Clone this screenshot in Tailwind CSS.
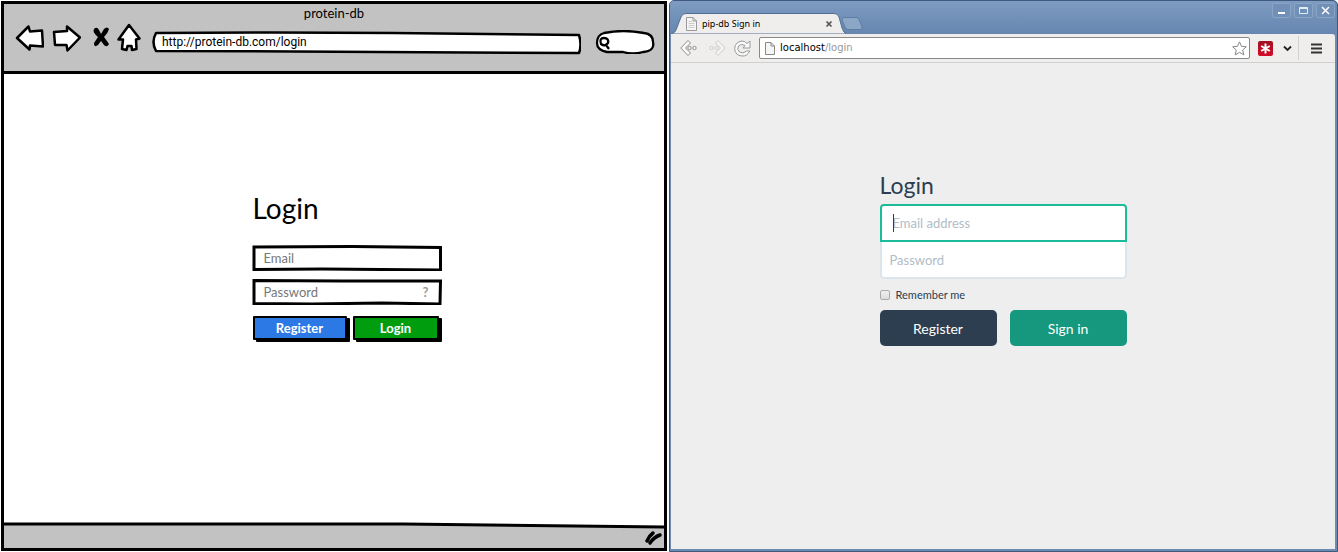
<!DOCTYPE html>
<html lang="en">
<head>
<meta charset="utf-8">
<meta name="viewport" content="width=device-width, initial-scale=1">
<title>Login wireframe and implementation</title>
<script src="https://cdn.jsdelivr.net/npm/@tailwindcss/browser@4"></script>
</head>
<body class="bg-white">
<div class="grid grid-cols-2 min-h-screen">

  <!-- Wireframe browser -->
  <section class="flex flex-col border-[3px] border-black bg-white text-black font-['Lato',sans-serif] text-[13px] leading-4 m-px mr-[2px]">
    <header class="bg-[#c2c2c2] border-b-[3px] border-black h-[70px] shrink-0 pt-px">
      <h2 class="text-center text-[13px] leading-4">protein-db</h2>
      <div class="flex items-center pl-[11px] pr-[8px] h-[32px]">
        <button aria-label="Back" class="w-[29px] h-[29px] shrink-0 mr-[8px]">
          <svg class="w-[29px] h-[29px]" viewBox="0 0 29 29" fill="#fff" stroke="#000" stroke-width="2.5" stroke-linejoin="round"><path d="M2 15 13.500 3.500 15 8.500 27 7.500 28 23.500 15 22.500 14.500 26.500Z"/></svg>
        </button>
        <button aria-label="Forward" class="w-[29px] h-[29px] shrink-0 mr-[11px]">
          <svg class="w-[29px] h-[29px]" viewBox="0 0 29 29" fill="#fff" stroke="#000" stroke-width="2.5" stroke-linejoin="round"><path d="M2 9 15 8 15 3.500 28 14.500 15.500 27.500 14.500 22 3 22Z"/></svg>
        </button>
        <button aria-label="Stop" class="w-[18px] h-[22px] shrink-0 mr-[7px]">
          <svg class="w-[18px] h-[22px]" viewBox="0 0 18 22" fill="#000"><path d="M2 3Q5 0 7 4L9 8 12 3Q15 0 17 3Q16 7 12 11Q15 15 17 18Q15 22 12 19L9 15 6 19Q2 22 2 17L6 11Q0 6 2 3Z"/></svg>
        </button>
        <button aria-label="Home" class="w-[24px] h-[30px] shrink-0 mr-[11px]">
          <svg class="w-[24px] h-[30px]" viewBox="0 0 24 30" fill="#fff" stroke="#000" stroke-width="2.500" stroke-linejoin="round"><path d="M12 3 22.500 16.500 19 17.500 19.500 27 15 28 14.500 24 10.500 24 9.500 28 5 27 6 17.500 1.500 17.500Z"/></svg>
        </button>
        <div class="relative flex-1 h-[24px] mt-[12px]">
          <svg class="absolute inset-0 w-full h-full" viewBox="0 0 427 24" preserveAspectRatio="none" fill="#fff" stroke="#000" stroke-width="2.500" stroke-linejoin="round"><path d="M4 2Q120 1 240 2L425 4Q428 14 425 22L140 20.500 4 20Q-1 11 4 2Z"/></svg>
          <input aria-label="Address" value="http://protein-db.com/login" class="relative block w-full h-[21px] px-[10px] bg-transparent outline-none font-['Roboto',sans-serif] text-[12px]">
        </div>
        <div class="relative w-[60px] h-[24px] ml-[14px] mr-px mt-[10px] shrink-0">
          <svg class="absolute inset-0 w-full h-full" viewBox="0 0 60 24" fill="#fff" stroke="#000" stroke-width="2.300"><path d="M9 3Q28-1 49 3Q58 4 58 12Q60 21 48 22Q38 25 28 22L12 22Q2 20 2 13Q2 5 9 3Z"/><path d="M9 8Q14 8 13 13Q10 17 6 14Q4 8 9 8ZM11 15 14 19"/></svg>
          <input aria-label="Search" class="relative block w-full h-full pl-[18px] pr-2 bg-transparent outline-none">
        </div>
      </div>
    </header>

    <main class="flex-1 pt-[117px] pl-[25px]">
      <form class="w-[190px] mx-auto">
        <h1 class="text-[28px] leading-[34px] mb-[20px] pl-px">Login</h1>
        <div class="relative h-[26px] mb-[8px]">
          <svg class="absolute inset-0 w-full h-full" viewBox="0 0 190 26" preserveAspectRatio="none" fill="#fff" stroke="#000" stroke-width="3"><path d="M2 2 100 1.500 188.500 2.500 188.500 25 70 24 2 24.500Z"/></svg>
          <input type="email" aria-label="Email" placeholder="Email" class="relative block w-full h-full px-[12px] bg-transparent outline-none text-[13px] placeholder:text-[#777]">
        </div>
        <div class="relative h-[26px] mb-[11px] flex items-center">
          <svg class="absolute inset-0 w-full h-full" viewBox="0 0 190 26" preserveAspectRatio="none" fill="#fff" stroke="#000" stroke-width="3"><path d="M2 1.500 90 2 188.500 2 188 25 130 24 60 25 2 24.500Z"/></svg>
          <input type="password" aria-label="Password" placeholder="Password" class="relative min-w-0 flex-1 h-full pl-[12px] bg-transparent outline-none text-[13px] placeholder:text-[#777]">
          <button type="button" aria-label="Forgot password" class="relative mr-[13px] font-bold text-[#999]">?</button>
        </div>
        <div class="grid grid-cols-[94fr_86fr] gap-[6px] text-white font-bold pl-px pr-[3px]">
          <button type="button" class="h-[24px] bg-[#2c78e4] border-2 border-black shadow-[3px_2px_0_#000] rounded-[1px]">Register</button>
          <button type="button" class="h-[24px] bg-[#009e0f] border-2 border-black shadow-[3px_2px_0_#000] rounded-[1px]">Login</button>
        </div>
      </form>
    </main>

    <footer class="relative h-[26px] shrink-0 flex items-center justify-end pr-px">
      <svg class="absolute inset-0 w-full h-full overflow-visible" viewBox="0 0 661 26" preserveAspectRatio="none"><path d="M0 2 400 2 661 5V26H0Z" fill="#c2c2c2"/><path d="M0 2 400 2 661 5" fill="none" stroke="#000" stroke-width="3"/></svg>
      <svg class="relative w-[20px] h-[20px] mt-[6px]" viewBox="0 0 20 20" fill="none" stroke="#000" stroke-linecap="round" stroke-width="3.500"><path d="M4 13Q6 8 10 5M7 15Q11 9 17 7"/></svg>
    </footer>
  </section>

  <!-- Implemented page in a desktop browser -->
  <section class="flex flex-col bg-[#6b8bb3] border border-[#3f5a7d] rounded-t-[5px] pr-[2px] pb-[2px]">
    <div class="flex justify-between h-[33px] shrink-0 bg-linear-to-b from-[#7e9cc1] to-[#6686b0] rounded-t-[4px] pl-px">
      <div class="flex items-end">
        <div class="relative h-[21px] w-[175px] flex items-center pl-[15px]">
          <svg class="absolute inset-0 w-full h-full" viewBox="0 0 175 21"><path d="M0 21Q4 20 5 17L10 4Q11 .5 15 .5H163Q167 .5 168 4L171 15Q173 20 175 21Z" fill="#efeeed" stroke="#536f96" stroke-width="1"/></svg>
          <svg class="relative w-[11px] h-[14px] mr-[5px]" viewBox="0 0 11 14" fill="#f5f5f5" stroke="#999"><path d="M.5.5H7L10.500 4V13.500H.5ZM7 .5V4H10.500"/><path stroke="#ccc" d="M2.500 4.500H6M2.500 6.500H8.500M2.500 8.500H8.500M2.500 10.500H8.500"/></svg>
          <span class="relative font-['Noto_Sans',sans-serif] text-[9px] leading-4 text-black">pip-db Sign in</span>
          <button aria-label="Close tab" class="relative ml-auto mr-[13px] w-[8px] h-[8px]"><svg class="w-[8px] h-[8px]" viewBox="0 0 8 8" stroke="#555" stroke-width="1.700"><path d="M1.500 1.500 6.500 6.500M6.500 1.500 1.500 6.500"/></svg></button>
        </div>
        <button aria-label="New tab" class="w-[22px] h-[13px] mb-[4px] -ml-[5px]"><svg class="w-[22px] h-[13px]" viewBox="0 0 22 13"><path d="M3 .5H15Q17 .5 18 2L21 10Q21.500 12.500 19 12.500H7Q5 12.500 4 10L1 3Q.5.5 3 .5Z" fill="#8ca6c6" stroke="#5c7ca5"/></svg></button>
      </div>
      <div class="flex gap-[3px] pt-[2px]">
        <button aria-label="Minimize" class="w-[19px] h-[15px] rounded-[2px] border border-[#89a4c5] bg-[#7190b8]"><svg class="w-full h-full" viewBox="0 0 17 13" stroke="#fff" stroke-width="2"><path d="M5 9H12"/></svg></button>
        <button aria-label="Maximize" class="w-[19px] h-[15px] rounded-[2px] border border-[#89a4c5] bg-[#7190b8]"><svg class="w-full h-full" viewBox="0 0 17 13" fill="none" stroke="#e4ebf3"><path d="M4.500 3.500H12.500V9.500H4.500ZM4.500 4.500H12.500"/></svg></button>
        <button aria-label="Close" class="w-[19px] h-[15px] rounded-[2px] border border-[#89a4c5] bg-[#7190b8]"><svg class="w-full h-full" viewBox="0 0 17 13" stroke="#fff" stroke-width="1.500"><path d="M5 3 12 10M12 3 5 10"/></svg></button>
      </div>
    </div>

    <div class="flex items-center h-[29px] shrink-0 bg-[#efeeed] border-b border-[#cfcfcf] rounded-tr-[3px] pl-[9px] pr-[13px] ml-px">
      <button aria-label="Back" class="w-[19px] h-[18px] mr-[8px]"><svg class="w-[19px] h-[18px]" viewBox="0 0 19 18" fill="#f9f9f9" stroke="#8d8d8d"><path d="M8 1.500 .8 9 8 16.500 10.500 14 5.500 9 10.500 4Z"/><circle cx="9.500" cy="9" r="1.700"/><circle cx="14.500" cy="9" r="1.700"/></svg></button>
      <button aria-label="Forward" class="w-[19px] h-[18px] mr-[8px]"><svg class="w-[19px] h-[18px]" viewBox="0 0 19 18" fill="#f4f4f4" stroke="#ccc"><path d="M11 1.500 18.200 9 11 16.500 8.500 14 13.500 9 8.500 4Z"/><circle cx="9.500" cy="9" r="1.700"/><circle cx="4.500" cy="9" r="1.700"/></svg></button>
      <button aria-label="Reload" class="w-[17px] h-[17px] mr-[8px]"><svg class="w-[17px] h-[17px]" viewBox="0 0 17 17" fill="#fafafa" stroke="#999"><path d="M13 3.500 16 1V8H9L11 5.500Q7.500 3 4.500 6Q2.500 9.500 5.500 12Q9 14.500 12.500 11H15.800Q13 16.500 8 16Q1 15.500 .7 8.500Q1 2 8 1Q11 1 13 3.500Z"/></svg></button>
      <div class="relative flex-1 flex items-center h-[22px] bg-white border border-[#888] rounded-[2px] pl-[5px] pr-[2px]">
        <svg class="w-[10px] h-[13px] mr-[5px]" viewBox="0 0 10 13" fill="#f5f5f5" stroke="#888"><path d="M.5.5H6L9.500 4V12.500H.5ZM6 .5V4H9.500"/></svg>
        <div contenteditable="true" role="textbox" aria-label="Address" class="flex-1 outline-none whitespace-nowrap font-['DejaVu_Sans',sans-serif] text-[10px] leading-4 text-[#999]"><span class="text-black">localhost</span>/login</div>
        <button aria-label="Bookmark" class="w-[15px] h-[15px]"><svg class="w-[15px] h-[15px]" viewBox="0 0 15 15" fill="#fff" stroke="#888" stroke-linejoin="round"><path d="M7.500 .8 9.500 5.300 14.300 5.800 10.700 9 11.800 13.900 7.500 11.400 3.200 13.900 4.300 9 .7 5.800 5.500 5.300Z"/></svg></button>
      </div>
      <button aria-label="LastPass" class="w-[15px] h-[15px] ml-[8px] bg-linear-to-b from-[#9f1020] to-[#d40a28] rounded-[2px]"><svg class="w-[15px] h-[15px]" viewBox="0 0 15 15" stroke="#fff" stroke-width="2"><path d="M7.500 2.500V12.500M3.200 5 11.800 10M11.800 5 3.200 10"/></svg></button>
      <button aria-label="More extensions" class="w-[9px] h-[7px] ml-[10px]"><svg class="w-[9px] h-[7px]" viewBox="0 0 9 7" fill="none" stroke="#222" stroke-width="1.800"><path d="M1 1.500 4.500 5 8 1.500"/></svg></button>
      <span class="w-px h-[24px] bg-[#d2d2d2] ml-[6px] mr-[12px]"></span>
      <button aria-label="Menu" class="w-[11px] h-[11px]"><svg class="w-[11px] h-[11px]" viewBox="0 0 11 11" stroke="#333" stroke-width="2"><path d="M0 1.500H11M0 5.500H11M0 9.500H11"/></svg></button>
    </div>

    <main class="flex-1 bg-[#eee] font-['Lato',sans-serif] text-[#2c3e50] pt-[108px] ml-px">
      <form class="w-[247px] mx-auto">
        <h1 class="text-[23px] leading-[28px] mb-[5px]">Login</h1>
        <!-- The focused field shows its caret before the placeholder -->
        <div class="relative">
          <input type="email" aria-label="Email address" placeholder="Email address" class="block w-full h-[38px] px-[11px] bg-white border-2 border-[#1abc9c] rounded-t-[4px] outline-none text-[13px] placeholder:text-[#b2bcc5]">
          <span class="absolute left-[13px] top-[10px] w-px h-[18px] bg-[#2c3e50]"></span>
        </div>
        <input type="password" aria-label="Password" placeholder="Password" class="block w-full h-[37px] px-[8px] bg-white border-2 border-t-0 border-[#dce4ec] rounded-b-[4px] outline-none text-[13px] placeholder:text-[#b2bcc5]">
        <label class="flex items-center gap-[6px] mt-[8px] mb-[7px] text-[11px] leading-4">
          <input type="checkbox" class="appearance-none w-[10px] h-[10px] border border-[#aaa] rounded-[2px] bg-linear-to-b from-[#eee] to-[#ddd]">Remember me
        </label>
        <div class="grid grid-cols-2 gap-[13px] text-white text-[14px]">
          <button type="button" class="h-[36px] rounded-[5px] bg-[#2c3e50]">Register</button>
          <button type="button" class="h-[36px] rounded-[5px] bg-[#15987e]">Sign in</button>
        </div>
      </form>
    </main>
  </section>
</div>
</body>
</html>
